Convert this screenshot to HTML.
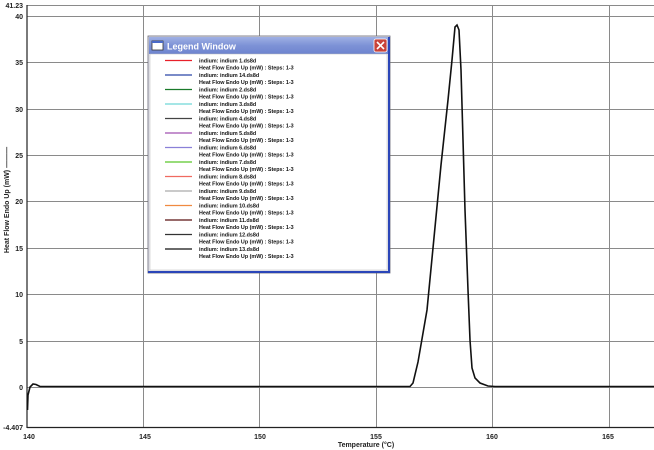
<!DOCTYPE html>
<html><head><meta charset="utf-8"><style>
html,body{margin:0;padding:0;background:#fff;}
svg{display:block;font-family:"Liberation Sans",Arial,sans-serif;}
</style></head><body>
<svg width="654" height="450" viewBox="0 0 654 450" xmlns="http://www.w3.org/2000/svg">
<defs>
<linearGradient id="tb" x1="0" y1="0" x2="0" y2="1">
<stop offset="0" stop-color="#9fb0e4"/><stop offset="0.5" stop-color="#7d92d6"/><stop offset="1" stop-color="#6e84cf"/>
</linearGradient>
</defs>
<rect width="654" height="450" fill="#fff"/>
<g stroke="#8a8a8a" stroke-width="1">
<line x1="27" y1="16.5" x2="654" y2="16.5"/>
<line x1="27" y1="62.5" x2="654" y2="62.5"/>
<line x1="27" y1="109.5" x2="654" y2="109.5"/>
<line x1="27" y1="155.5" x2="654" y2="155.5"/>
<line x1="27" y1="201.5" x2="654" y2="201.5"/>
<line x1="27" y1="248.5" x2="654" y2="248.5"/>
<line x1="27" y1="294.5" x2="654" y2="294.5"/>
<line x1="27" y1="341.5" x2="654" y2="341.5"/>
<line x1="27" y1="387.5" x2="654" y2="387.5"/>
<line x1="143.5" y1="5" x2="143.5" y2="427"/>
<line x1="259.5" y1="5" x2="259.5" y2="427"/>
<line x1="376.5" y1="5" x2="376.5" y2="427"/>
<line x1="492.5" y1="5" x2="492.5" y2="427"/>
<line x1="609.5" y1="5" x2="609.5" y2="427"/>
<line x1="27" y1="5.5" x2="654" y2="5.5"/>
</g>
<g stroke="#222" stroke-width="1.2">
<line x1="27" y1="5" x2="27" y2="428"/>
<line x1="27" y1="427.5" x2="654" y2="427.5"/>
</g>
<g font-size="7" fill="#222" text-anchor="end" font-weight="bold">
<text x="23" y="8">41.23</text>
<text x="23" y="19">40</text>
<text x="23" y="65">35</text>
<text x="23" y="112">30</text>
<text x="23" y="158">25</text>
<text x="23" y="204">20</text>
<text x="23" y="251">15</text>
<text x="23" y="297">10</text>
<text x="23" y="344">5</text>
<text x="23" y="390">0</text>
<text x="23" y="430">-4.407</text>
</g>
<g font-size="7" fill="#222" text-anchor="middle" font-weight="bold">
<text x="29" y="439">140</text>
<text x="145" y="439">145</text>
<text x="260" y="439">150</text>
<text x="376" y="439">155</text>
<text x="492" y="439">160</text>
<text x="608" y="439">165</text>
<text x="366" y="447">Temperature (°C)</text>
</g>
<text x="0" y="0" font-size="7" font-weight="bold" fill="#222" text-anchor="middle" transform="translate(9,200) rotate(-90)">Heat Flow Endo Up (mW) ———</text>
<path d="M27.5,410 L28,395 L30,387 L33,384 L36,384.5 L40,386.5 L50,386.5 L405,386.5 L410,386.5 L413,383 L418,362 L427,310 L433,248 L441,165 L448,100 L452,60 L455,27 L457,25 L459,30 L461,70 L463,140 L465,210 L468,290 L470,340 L472,368 L475,378 L480,383 L488,386 L495,386.5 L654,386.5" fill="none" stroke="#111" stroke-width="1.6"/>
<!-- legend window -->
<rect x="148" y="36" width="242" height="237" fill="#e8e8ee" stroke="#667" stroke-width="0.8"/>
<rect x="149" y="37" width="240" height="17" fill="url(#tb)"/>
<rect x="150" y="54" width="237" height="216" fill="#fff" stroke="#bbb" stroke-width="0.5"/>
<line x1="389" y1="37" x2="389" y2="272" stroke="#2a45b8" stroke-width="2"/>
<line x1="148" y1="272" x2="390" y2="272" stroke="#2a45b8" stroke-width="2"/>
<rect x="152" y="41" width="11" height="9" fill="#fff" stroke="#333" stroke-width="0.8"/>
<rect x="152" y="41" width="11" height="2" fill="#4a6ac8"/>
<text x="167" y="49.5" font-size="9" font-weight="bold" fill="#fff">Legend Window</text>
<rect x="374" y="39" width="13" height="13" fill="#c9433a" stroke="#fff" stroke-width="0.8" rx="2"/>
<path d="M377,42 L384,49 M384,42 L377,49" stroke="#fff" stroke-width="1.6"/>
<g stroke-width="1.3">
<line x1="165" x2="192" y1="60.5" y2="60.5" stroke="#e8202a"/>
<line x1="165" x2="192" y1="75" y2="75" stroke="#2b46a8"/>
<line x1="165" x2="192" y1="89.5" y2="89.5" stroke="#1a7a2a"/>
<line x1="165" x2="192" y1="104" y2="104" stroke="#6fd7d7"/>
<line x1="165" x2="192" y1="118.5" y2="118.5" stroke="#444"/>
<line x1="165" x2="192" y1="133" y2="133" stroke="#a050b0"/>
<line x1="165" x2="192" y1="147.5" y2="147.5" stroke="#8a80d8"/>
<line x1="165" x2="192" y1="162" y2="162" stroke="#5ac82a"/>
<line x1="165" x2="192" y1="176.5" y2="176.5" stroke="#f06a60"/>
<line x1="165" x2="192" y1="191" y2="191" stroke="#aaa"/>
<line x1="165" x2="192" y1="205.5" y2="205.5" stroke="#f08a40"/>
<line x1="165" x2="192" y1="220" y2="220" stroke="#5a1010"/>
<line x1="165" x2="192" y1="234.5" y2="234.5" stroke="#333"/>
<line x1="165" x2="192" y1="249" y2="249" stroke="#111"/>
</g>
<g font-size="5.4" font-weight="bold" fill="#111">
<text x="199" y="62.5">indium: indium 1.ds8d</text><text x="199" y="69.5">Heat Flow Endo Up (mW) : Steps: 1-3</text>
<text x="199" y="77">indium: indium 14.ds8d</text><text x="199" y="84">Heat Flow Endo Up (mW) : Steps: 1-3</text>
<text x="199" y="91.5">indium: indium 2.ds8d</text><text x="199" y="98.5">Heat Flow Endo Up (mW) : Steps: 1-3</text>
<text x="199" y="106">indium: indium 3.ds8d</text><text x="199" y="113">Heat Flow Endo Up (mW) : Steps: 1-3</text>
<text x="199" y="120.5">indium: indium 4.ds8d</text><text x="199" y="127.5">Heat Flow Endo Up (mW) : Steps: 1-3</text>
<text x="199" y="135">indium: indium 5.ds8d</text><text x="199" y="142">Heat Flow Endo Up (mW) : Steps: 1-3</text>
<text x="199" y="149.5">indium: indium 6.ds8d</text><text x="199" y="156.5">Heat Flow Endo Up (mW) : Steps: 1-3</text>
<text x="199" y="164">indium: indium 7.ds8d</text><text x="199" y="171">Heat Flow Endo Up (mW) : Steps: 1-3</text>
<text x="199" y="178.5">indium: indium 8.ds8d</text><text x="199" y="185.5">Heat Flow Endo Up (mW) : Steps: 1-3</text>
<text x="199" y="193">indium: indium 9.ds8d</text><text x="199" y="200">Heat Flow Endo Up (mW) : Steps: 1-3</text>
<text x="199" y="207.5">indium: indium 10.ds8d</text><text x="199" y="214.5">Heat Flow Endo Up (mW) : Steps: 1-3</text>
<text x="199" y="222">indium: indium 11.ds8d</text><text x="199" y="229">Heat Flow Endo Up (mW) : Steps: 1-3</text>
<text x="199" y="236.5">indium: indium 12.ds8d</text><text x="199" y="243.5">Heat Flow Endo Up (mW) : Steps: 1-3</text>
<text x="199" y="251">indium: indium 13.ds8d</text><text x="199" y="258">Heat Flow Endo Up (mW) : Steps: 1-3</text>
</g>
</svg>
</body></html>
